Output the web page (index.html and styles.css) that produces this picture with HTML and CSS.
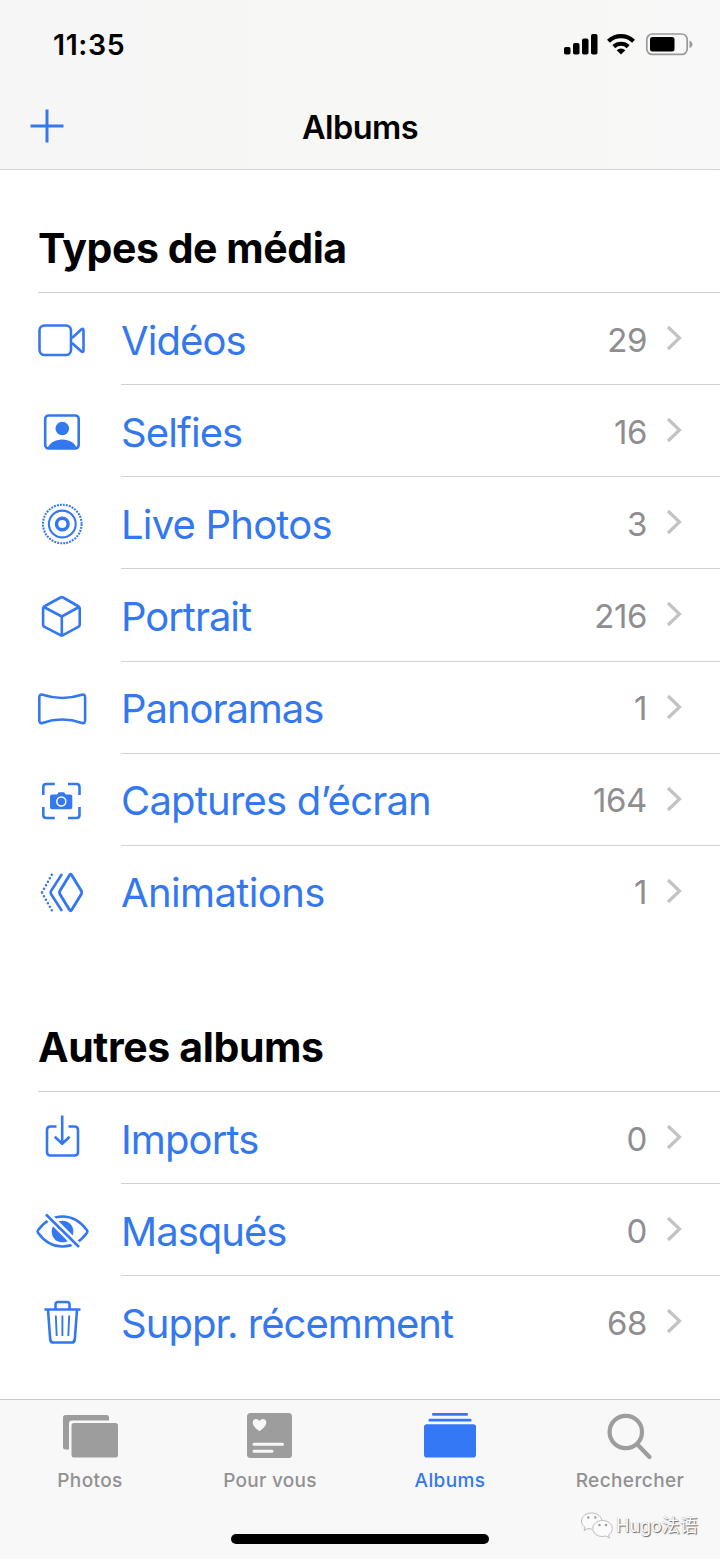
FILE: index.html
```html
<!DOCTYPE html>
<html lang="fr">
<head>
<meta charset="utf-8">
<title>Albums</title>
<link rel="stylesheet" href="styles.css">
</head>
<body>
<div class="screen">
  <header class="header">
    <div class="status">
      <span class="time">11:35</span>
      <svg class="status-icons" viewBox="560 28 136 32">
        <g fill="#000">
          <rect x="564" y="47" width="6.5" height="7.5" rx="1.8"/>
          <rect x="573" y="43" width="6.5" height="11.5" rx="1.8"/>
          <rect x="582" y="38.500" width="6.500" height="16" rx="1.800"/>
          <rect x="591" y="34" width="6.500" height="20.500" rx="1.800"/>
          <path d="M621 54.500l-4.300-4.300a6.200 6.200 0 0 1 8.600 0z"/>
          <rect x="650" y="37" width="24.500" height="14.500" rx="2.500"/>
        </g>
        <g fill="none" stroke="#000" stroke-width="4.200">
          <path d="M608.500 41.200a18 18 0 0 1 25 0"/>
          <path d="M613.800 46.600a10.500 10.500 0 0 1 14.400 0"/>
        </g>
        <rect x="646.800" y="34" width="40.400" height="20.400" rx="5.500" fill="none" stroke="#999" stroke-width="1.700"/>
        <path d="M689.500 40.500q3 1.200 3 3.800t-3 3.800z" fill="#999"/>
      </svg>
    </div>
    <div class="navbar">
      <svg class="add" viewBox="0 0 34 34"><path d="M17 .5v33M.5 17h33"/></svg>
      <h1 class="title">Albums</h1>
    </div>
  </header>

  <main class="content">
    <section class="section">
      <h2 class="heading">Types de média</h2>
      <ul class="list">
        <li class="row">
          <svg class="icon" viewBox="32 310 60 60"><rect x="39.500" y="325.500" width="31.500" height="29.500" rx="5"/><path d="M72 338l9.500-8.700q2-1.300 2 1v20.200q0 2.300-2 1L72 343"/></svg>
          <div class="cell"><span class="label l-videos">Vidéos</span><span class="count">29</span><svg class="chevron" viewBox="0 0 16 26"><path d="M2 2l11.500 11L2 24"/></svg></div>
        </li>
        <li class="row">
          <svg class="icon" viewBox="32 402 60 60"><rect x="45.200" y="415.500" width="33.500" height="33" rx="3.500"/><circle class="solid" cx="62.300" cy="428.500" r="6.800"/><path class="solid" d="M47 449c2.500-6 8-9.500 15.200-9.500s12.800 3.500 15.200 9.500z"/></svg>
          <div class="cell"><span class="label l-selfies">Selfies</span><span class="count">16</span><svg class="chevron" viewBox="0 0 16 26"><path d="M2 2l11.500 11L2 24"/></svg></div>
        </li>
        <li class="row">
          <svg class="icon" viewBox="32 494.500 60 60"><circle cx="62.300" cy="524.500" r="5.800" stroke-width="3.500"/><circle cx="62.300" cy="524.500" r="13.400" stroke-width="2.100"/><circle cx="62.300" cy="524.500" r="19.300" stroke-width="2.100" stroke-dasharray="1.900 1.132"/></svg>
          <div class="cell"><span class="label l-live">Live Photos</span><span class="count">3</span><svg class="chevron" viewBox="0 0 16 26"><path d="M2 2l11.500 11L2 24"/></svg></div>
        </li>
        <li class="row">
          <svg class="icon" viewBox="32 586.500 60 60"><path d="M60.500 598q1.300-.8 2.600 0l15.600 9q1 .7 1 2v16.200q0 1.300-1 2L63 635.700q-1.300.8-2.600 0l-16.300-8.500q-1-.7-1-2V609q0-1.300 1-2zM43.800 607.500l18 9.500 17.200-9.500M61.800 617v18"/></svg>
          <div class="cell"><span class="label l-portrait">Portrait</span><span class="count">216</span><svg class="chevron" viewBox="0 0 16 26"><path d="M2 2l11.500 11L2 24"/></svg></div>
        </li>
        <li class="row">
          <svg class="icon" viewBox="32 679 60 60"><path d="M39.300 697.500q0-3.700 3.200-2.700 19.700 6.400 39.400 0 3.200-1 3.200 2.700v22.700q0 3.700-3.200 2.700-19.700-6.800-39.400 0-3.200 1-3.200-2.700z"/></svg>
          <div class="cell"><span class="label l-pano">Panoramas</span><span class="count">1</span><svg class="chevron" viewBox="0 0 16 26"><path d="M2 2l11.500 11L2 24"/></svg></div>
        </li>
        <li class="row">
          <svg class="icon" viewBox="32 771 60 60"><path d="M43.300 795v-8q0-3 3-3h8.500M68 784h8.500q3 0 3 3v8M79.500 807v8q0 3-3 3H68M54.800 818h-8.500q-3 0-3-3v-8"/><path class="solid" d="M52 794.500h5l1.700-2.300h5.400l1.700 2.300h4.500q2 0 2 2v10.700q0 2-2 2H52q-2 0-2-2v-10.700q0-2 2-2z"/><circle cx="61.300" cy="801.500" r="4.500" stroke="#fff" stroke-width="1.500"/></svg>
          <div class="cell"><span class="label l-captures">Captures d’écran</span><span class="count">164</span><svg class="chevron" viewBox="0 0 16 26"><path d="M2 2l11.500 11L2 24"/></svg></div>
        </li>
        <li class="row">
          <svg class="icon" viewBox="32 863.500 60 60"><path stroke-width="2.900" d="M69.600 875.500q1-1.400 2 0l9.800 16q.8 1.500 0 3l-9.800 16q-1 1.400-2 0l-9.800-16q-.8-1.500 0-3z"/><path d="M62 874.500L51 891.500q-.8 1.500 0 3L62 911.500"/><path d="M51.800 875.200L42 892.800M51.800 910.800L42 893.300" stroke-linecap="round" stroke-dasharray="0 4" stroke-width="2.500"/></svg>
          <div class="cell"><span class="label l-anim">Animations</span><span class="count">1</span><svg class="chevron" viewBox="0 0 16 26"><path d="M2 2l11.500 11L2 24"/></svg></div>
        </li>
      </ul>
    </section>

    <section class="section">
      <h2 class="heading heading-other">Autres albums</h2>
      <ul class="list">
        <li class="row">
          <svg class="icon" viewBox="32 1108.500 60 60"><path d="M56.500 1126h-6q-3.500 0-3.500 3.500v22q0 3.500 3.500 3.500h24q3.500 0 3.500-3.500v-22q0-3.500-3.500-3.500h-6"/><path d="M62.200 1115v28M54.800 1136.200l7.400 7 7.400-7"/></svg>
          <div class="cell"><span class="label l-imports">Imports</span><span class="count">0</span><svg class="chevron" viewBox="0 0 16 26"><path d="M2 2l11.500 11L2 24"/></svg></div>
        </li>
        <li class="row">
          <svg class="icon" viewBox="32 1200.500 60 60"><path d="M38 1229.800C44 1221.500 53 1216 62.500 1216s18.500 5.500 24.500 13.800q.9 1.200 0 2.400C81 1240.500 72 1246 62.500 1246S44 1240.500 38 1232.200q-.9-1.200 0-2.400z"/><circle class="solid" cx="62.500" cy="1231" r="10.800"/><path stroke="#fff" stroke-width="7.500" d="M45.500 1213l34.500 34.500"/><path stroke-width="2.600" d="M46 1214l33 32.500"/></svg>
          <div class="cell"><span class="label l-masques">Masqués</span><span class="count">0</span><svg class="chevron" viewBox="0 0 16 26"><path d="M2 2l11.500 11L2 24"/></svg></div>
        </li>
        <li class="row">
          <svg class="icon" viewBox="32 1292.500 60 60"><path d="M44.500 1309h36M55.500 1308.500v-4.500q0-2.500 2.500-2.500h9q2.500 0 2.500 2.500v4.500M48 1309.500l2.200 29.500q.3 3 3.300 3h18q3 0 3.300-3l2.200-29.500"/><path stroke-width="1.900" d="M55.800 1315l.9 20.500M62.400 1315v20.500M69.200 1315l-.9 20.500"/></svg>
          <div class="cell"><span class="label l-suppr">Suppr. récemment</span><span class="count">68</span><svg class="chevron" viewBox="0 0 16 26"><path d="M2 2l11.500 11L2 24"/></svg></div>
        </li>
      </ul>
    </section>
  </main>

  <footer class="footer">
    <nav class="tabs">
      <div class="tab">
        <svg class="tab-icon" viewBox="60 1408 60 56"><path d="M65.500 1415h41q2.500 0 2.500 2.500v3H72q-3 0-3 3v26h-3.500q-2.500 0-2.500-2.500v-29.500q0-2.500 2.500-2.500z"/><rect x="71.500" y="1423" width="46.500" height="34.500" rx="2.500"/></svg>
        <span class="tab-label">Photos</span>
      </div>
      <div class="tab">
        <svg class="tab-icon" viewBox="240 1408 60 56"><rect x="247" y="1413" width="45" height="45" rx="3.500"/><path class="cut" d="M259.500 1431.200c-2-1.700-6.800-4.700-6.800-8.700 0-4.200 4.800-4.700 6.800-1.500 2-3.200 6.800-2.700 6.800 1.500 0 4-4.800 7-6.800 8.700z"/><path class="cut-line" d="M254 1444.300h28.500M254 1451.300h18"/></svg>
        <span class="tab-label l-pour">Pour vous</span>
      </div>
      <div class="tab tab-active">
        <svg class="tab-icon" viewBox="420 1408 60 56"><rect x="432" y="1413" width="36" height="2.800" rx="1.200"/><rect x="428.500" y="1418.800" width="43" height="2.800" rx="1.200"/><rect x="424" y="1424.300" width="52" height="33.200" rx="2.800"/></svg>
        <span class="tab-label">Albums</span>
      </div>
      <div class="tab">
        <svg class="tab-icon lens" viewBox="600 1408 60 56"><circle cx="625.800" cy="1432" r="16.200"/><path d="M637.500 1444.500l12 12.500"/></svg>
        <span class="tab-label l-search">Rechercher</span>
      </div>
    </nav>
    <div class="home-bar"></div>
    <div class="watermark">
      <svg class="bubbles" viewBox="0 0 34 28"><path d="M22 8.500C20.500 3 16 1 11.500 1 6 1 1.500 4.500 1.500 9c0 2.700 1.400 4.700 3.600 6.200L4 18.500l4-2 4 .7"/><path d="M22.500 8.500c-5.500 0-9.700 3.500-9.700 8s4.200 8 9.700 8l3.300-.5 3.700 2-.9-3.200c2.200-1.400 3.700-3.700 3.700-6.300 0-4.500-4.300-8-9.800-8z"/><path class="eyes" d="M8.300 5.500v.1M15.300 5.500v.1M19.500 13v.1M26 13v.1"/></svg>
      <span>Hugo法语</span>
    </div>
  </footer>
</div>
</body>
</html>
```
FILE: styles.css
```css
* { box-sizing: border-box; }
body { margin: 0; background: #fff; font-family: Inter, "Noto Sans CJK SC", sans-serif; }
.screen { width: 720px; height: 1559px; display: flex; flex-direction: column; overflow: hidden; }

.header { height: 170px; background: linear-gradient(90deg, #f6f6f6, #f7f7f5 70%, #f8f8f8); border-bottom: 1px solid #d4d4d4; }
.status { height: 88px; padding: 28px 24px 0 53px; display: flex; justify-content: space-between; align-items: flex-start; }
.time { font-size: 28.500px; line-height: 33px; font-weight: 600; letter-spacing: .6px; }
.status-icons { width: 136px; height: 32px; }
.navbar { height: 76px; display: grid; grid-template-columns: 34px 1fr 34px; align-items: center; padding: 0 30px; }
.add { width: 34px; height: 34px; stroke: #3478f0; stroke-width: 3; }
.title { margin: 3px 0 0; text-align: center; font-size: 32.500px; line-height: 40px; font-weight: 600; letter-spacing: -.6px; }

.content { flex: 1; }
.heading { margin: 0 0 0 38px; height: 123px; padding-top: 53px; font-size: 41px; line-height: 50px; font-weight: 700; letter-spacing: -.45px; border-bottom: 1px solid #cdcdcd; }
.heading-other { height: 154px; padding-top: 84px; letter-spacing: -.38px; }
.list { list-style: none; margin: 0; padding: 0 0 0 32px; }
.row { height: 92.150px; display: flex; align-items: center; }
.icon { width: 60px; height: 60px; margin: 2px 29px 0 0; flex: none; fill: none; stroke: #3478f0; stroke-width: 2.600; stroke-linejoin: round; }
.icon .solid { fill: #3478f0; stroke: none; }
.cell { flex: 1; height: 100%; display: flex; align-items: center; padding: 3px 38px 0 0; border-bottom: 1px solid #d2d2d2; }
.row:last-child .cell { border-bottom-color: transparent; }
.label { flex: 1; color: #3478f0; font-size: 40px; line-height: 50px; margin-top: 1px; white-space: nowrap; letter-spacing: -.9px; }
.l-live, .l-captures { letter-spacing: -.8px; }
.l-portrait, .l-pano { letter-spacing: -1.050px; }
.l-anim { letter-spacing: -.62px; }
.l-masques, .l-suppr { letter-spacing: -.97px; }
.count { color: #8e8e90; font-size: 33px; line-height: 40px; margin: -1px 19px 0 0; letter-spacing: -.4px; }
.chevron { width: 16px; height: 26px; margin-top: -4px; fill: none; stroke: #c3c3c6; stroke-width: 3.200; }

.footer { position: relative; height: 160px; background: #f8f8f8; border-top: 1px solid #c9c9c9; }
.tabs { display: grid; grid-template-columns: repeat(4, 1fr); }
.tab { display: flex; flex-direction: column; align-items: center; padding-top: 8px; color: #9d9d9d; }
.tab-active { color: #3478f6; }
.tab-icon { width: 60px; height: 56px; fill: currentColor; }
.lens { fill: none; stroke: currentColor; stroke-width: 4.200; stroke-linecap: round; }
.cut { fill: #f8f8f8; }
.cut-line { stroke: #f8f8f8; stroke-width: 3; stroke-linecap: round; }
.tab-label { color: #919191; font-size: 19px; line-height: 24px; margin-top: 5px; font-weight: 500; letter-spacing: .4px; }
.tab-active .tab-label { color: #3478f0; }
.l-pour { letter-spacing: .28px; }
.home-bar { width: 258px; height: 10px; border-radius: 5px; background: #000; margin: 41px auto 0; }
.watermark { position: absolute; left: 580px; top: 112px; display: flex; align-items: center; gap: 2px; color: #fff; font-size: 18px; line-height: 28px; white-space: nowrap; text-shadow: 1px 1px 1px #666, 0 0 1px #999; }
.bubbles { width: 34px; height: 28px; fill: #fbfbfb; stroke: #bbb; stroke-width: 1; }
.bubbles .eyes { stroke: #999; stroke-width: 2.400; stroke-linecap: round; }
```
